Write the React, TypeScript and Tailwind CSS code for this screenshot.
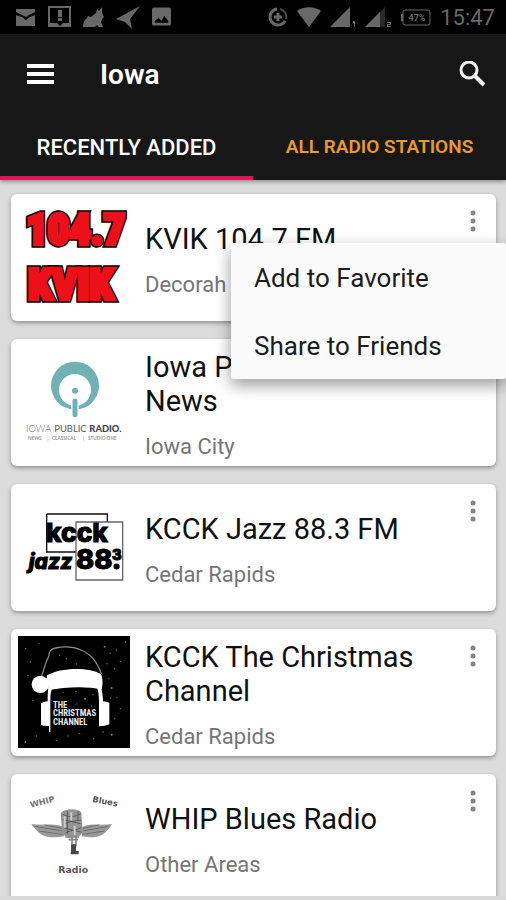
import type { ReactNode } from "react";

function KvikLogo() {
  return (
    <svg viewBox="54 49 336 336" className="size-28" aria-label="104.7 KVIK">
      <g
        fill="#ee1018"
        fontFamily="'Roboto Condensed', 'Liberation Sans Narrow', Roboto, sans-serif"
        fontWeight="800"
      >
        <text x="79" y="179" fontSize="127" stroke="#000" strokeWidth="22">104.7</text>
        <text x="79" y="179" fontSize="127" stroke="#ee1018" strokeWidth="13">104.7</text>
        <text x="84" y="343" fontSize="130" stroke="#000" strokeWidth="22">KVIK</text>
        <text x="84" y="343" fontSize="130" stroke="#ee1018" strokeWidth="13">KVIK</text>
      </g>
    </svg>
  );
}

function IowaPublicLogo() {
  return (
    <svg viewBox="54 49 336 336" className="size-28" aria-label="Iowa Public Radio">
      <circle cx="225" cy="168" r="72" fill="#6fb1b5" />
      <circle cx="225" cy="181" r="48" fill="#fff" />
      <path d="M214 205h22v46h-22z" fill="#fff" />
      <circle cx="225" cy="183" r="9" fill="#6fb1b5" />
      <path d="M225 214v41" stroke="#6fb1b5" strokeWidth="15" strokeLinecap="round" />
      <g fontFamily="Lato, sans-serif" fill="#666">
        <text x="78" y="307" fontSize="28" fontWeight="300">IOWA</text>
        <text x="163" y="307" fontSize="28" fontWeight="500">PUBLIC</text>
        <text x="268" y="307" fontSize="28" fontWeight="900" fill="#444">RADIO.</text>
        <text x="84" y="330" fontSize="14" fontWeight="700" fill="#999">NEWS</text>
        <text x="142" y="330" fontSize="14" fill="#999">|</text>
        <text x="156" y="330" fontSize="14" fontWeight="700" fill="#999">CLASSICAL</text>
        <text x="249" y="330" fontSize="14" fill="#999">|</text>
        <text x="264" y="330" fontSize="14" fontWeight="700" fill="#999">STUDIO ONE</text>
      </g>
    </svg>
  );
}

function KcckLogo() {
  return (
    <svg viewBox="54 49 336 336" className="size-28" aria-label="KCCK Jazz 88.3">
      <path d="M140 118h182v24M140 118v114h88" fill="none" stroke="#111" strokeWidth="4" />
      <path d="M228 142h140v174h-140z" fill="none" stroke="#666" strokeWidth="4" />
      <g fontFamily="Inter, 'Open Sans', sans-serif" fontWeight="800" fill="#000" stroke="#000" strokeWidth="3">
        <text x="138" y="203" fontSize="79">kcck</text>
        <text x="86" y="283" fontSize="63" fontStyle="italic">jazz</text>
        <text x="228" y="283" fontSize="82">88.</text>
        <text x="336" y="256" fontSize="44">3</text>
      </g>
    </svg>
  );
}

const snow = [
  [78, 90, 2], [92, 130, 2], [118, 74, 2], [84, 170, 2], [100, 245, 2], [77, 370, 3], [110, 352, 2],
  [315, 84, 3], [332, 104, 2], [350, 94, 2], [378, 70, 2], [322, 135, 2], [345, 150, 2], [362, 128, 2],
  [328, 180, 2], [336, 208, 3], [352, 236, 2], [333, 238, 2], [362, 270, 2], [345, 300, 2], [336, 348, 3],
  [310, 340, 2], [282, 360, 2], [240, 345, 2], [205, 352, 2], [170, 365, 2], [190, 222, 2], [228, 218, 2],
  [256, 240, 3], [280, 228, 2], [232, 256, 2], [276, 262, 2], [200, 120, 2], [230, 136, 2], [180, 110, 2],
];

function ChristmasLogo() {
  return (
    <svg viewBox="55 52 336 336" className="size-28" aria-label="The Christmas Channel">
      <path d="M55 52h336v336H55z" fill="#000" />
      {snow.map(([x, y, r]) => (
        <circle key={`${x}-${y}`} cx={x} cy={y} r={r} fill="#777" />
      ))}
      <path
        d="M126 172C134 150 138 128 148 112C148 98 152 91 168 88C196 82 222 84 244 94C274 106 294 132 305 166"
        fill="none"
        stroke="#8a8a8a"
        strokeWidth="4"
      />
      <path d="M142 170C180 146 268 144 304 166C310 180 310 196 306 212C262 202 196 204 148 214C142 200 140 184 142 170z" fill="#fff" />
      <circle cx="122" cy="197" r="26" fill="#fff" />
      <path d="M146 208h12c-6 12-6 26-6 40v92h-4v-18c-10 0-18-1-24-4v-64c6-4 12-5 20-6c0-14 0-28 2-40z" fill="#fff" />
      <path d="M292 206h12c4 14 6 28 6 42c8 1 14 2 19 5v64c-8 4-18 6-31 6v-75c0-16-2-30-6-42z" fill="#fff" />
      <g fontFamily="'Roboto Condensed', 'Liberation Sans Narrow', Roboto, sans-serif" fontWeight="700" fontSize="26" fill="#e8e8e8">
        <text x="160" y="267">THE</text>
        <text x="160" y="293">CHRISTMAS</text>
        <text x="160" y="318">CHANNEL</text>
      </g>
    </svg>
  );
}

function WhipLogo() {
  return (
    <svg viewBox="54 52 336 336" className="size-28" aria-label="WHIP Blues Radio">
      <path d="M94 181C125 186 160 178 192 190v28c-24 4-50 4-66-5c-14-8-24-20-32-32z" fill="#9a9a9a" />
      <path d="M336 181C305 186 274 178 246 190v28c24 4 44 4 60-5c14-8 24-20 30-32z" fill="#9a9a9a" />
      <path d="M104 188l84 14M116 202l72 10M134 184l54 10M326 188l-78 14M314 202l-66 10M296 184l-48 10" stroke="#6f6f6f" strokeWidth="3" />
      <path d="M182 150c8-16 54-18 62-2l4 52c0 12-8 18-18 20h-24c-12-2-20-10-20-22z" fill="#959595" />
      <path d="M188 152c16 10 38 8 54-2M188 168l54 12M190 184c16-12 36-12 52-14M190 192l54 14M196 208c16-10 36-8 48-16M202 142v70M234 142v30" stroke="#5c5c5c" strokeWidth="3" fill="none" />
      <path d="M194 158v34M214 146v24M224 186v28" stroke="#ccc" strokeWidth="6" />
      <path d="M196 220h42M206 228h28M216 220v30M228 222v26" stroke="#858585" strokeWidth="5" />
      <path d="M214 242h14v20h8v10h-24z" fill="#444" />
      <g fontFamily="'DejaVu Sans', sans-serif" fontWeight="700" fill="#555">
        <text x="92" y="132" transform="rotate(-14 92 132)" fontSize="25" fill="#777">WHIP</text>
        <text x="276" y="114" transform="rotate(11 276 114)" fontSize="25">Blues</text>
        <text x="175" y="327" fontSize="28">Radio</text>
      </g>
    </svg>
  );
}

function StatusBar() {
  return (
    <div className="flex h-[34px] shrink-0 items-center justify-between bg-black pr-[11px] pl-[15px] text-[#686868]">
      <div className="flex items-center gap-3">
        <svg width="21" height="17" viewBox="0 0 21 17" fill="currentColor">
          <path d="M1 0h19v3l-6 3-3 2-4-2-6-3zM1 6l6 2 4 3 4-3 5-2v11H1z" />
        </svg>
        <svg width="23" height="22" viewBox="0 0 23 22" fill="currentColor">
          <path fillRule="evenodd" d="M0 0h23v21H0zM2 2v15h19V2z" />
          <path d="M10 4h4v7h-4zM10 12h4v3h-4z" />
          <path d="M8 16h8l-4 4z" fill="#000" />
        </svg>
        <svg width="21" height="21" viewBox="0 0 21 21" fill="currentColor">
          <path d="M0 20c0-4 1-7 4-9l1-2 3 1 5-4 1-4 2 2 3-4v6l2 4-2 2-1 3 2 5h-4l-2-2-2 2z" />
        </svg>
        <svg width="24" height="23" viewBox="0 0 24 23" fill="currentColor">
          <path d="M24 0L0 13l9 3 7 7-2-10z" />
        </svg>
        <svg width="19" height="20" viewBox="0 0 20 20" fill="currentColor">
          <path fillRule="evenodd" d="M2 0h16a2 2 0 0 1 2 2v15a2 2 0 0 1-2 2H2a2 2 0 0 1-2-2V2a2 2 0 0 1 2-2zM3 16h14v-2l-4-5-3 5-3-3-4 3z" />
        </svg>
      </div>
      <div className="flex items-center gap-[9px]">
        <svg width="20" height="20" viewBox="0 0 20 20" fill="none" stroke="currentColor">
          <path d="M9 2a8 8 0 1 0 8 12" strokeWidth="3" />
          <path d="M12 2a8 8 0 0 1 6 10" strokeWidth="2" opacity=".7" />
          <path d="M10 6v8M6 10h8" strokeWidth="3" />
        </svg>
        <svg width="24" height="20" viewBox="0 0 24 20" fill="currentColor">
          <path d="M0 4C7-1 17-1 24 4L12 20z" />
        </svg>
        <svg width="26" height="20" viewBox="0 0 26 20" fill="currentColor">
          <path d="M20 0v20H0z" />
          <path d="M23 14h2v6h-1v-4h-1z" />
        </svg>
        <svg width="27" height="20" viewBox="0 0 27 20" fill="currentColor">
          <path d="M20 0v20H0z" opacity=".4" />
          <path d="M15 5v15H0z" />
          <path d="M22 15h4v3h-3v1h3v1h-4v-3h3v-1h-3z" />
        </svg>
        <svg width="30" height="17" viewBox="0 0 30 17">
          <rect x="2" y="1" width="27" height="15" rx="2" fill="none" stroke="currentColor" strokeWidth="1" />
          <path d="M0 5h2v7H0z" fill="currentColor" />
          <text x="16" y="12" textAnchor="middle" fontSize="9" fontWeight="700" fill="currentColor">47%</text>
        </svg>
        <span className="text-[22px]">15:47</span>
      </div>
    </div>
  );
}

type Station = {
  name: string;
  city: string;
  logo: ReactNode;
};

const stations: Station[] = [
  { name: "KVIK 104.7 FM", city: "Decorah", logo: <KvikLogo /> },
  { name: "Iowa Public Radio - News", city: "Iowa City", logo: <IowaPublicLogo /> },
  { name: "KCCK Jazz 88.3 FM", city: "Cedar Rapids", logo: <KcckLogo /> },
  { name: "KCCK The Christmas Channel", city: "Cedar Rapids", logo: <ChristmasLogo /> },
  { name: "WHIP Blues Radio", city: "Other Areas", logo: <WhipLogo /> },
];

function StationMenu() {
  return (
    <div
      role="menu"
      className="absolute top-[49px] -right-[10px] z-10 flex w-[275px] flex-col rounded-xs bg-[#fafafa] text-[26px] text-[#1c1c1c] shadow-[0_6px_16px_rgba(0,0,0,0.4)]"
    >
      <button role="menuitem" className="h-[68px] px-[23px] pt-[3px] text-left">Add to Favorite</button>
      <button role="menuitem" className="h-[68px] px-[23px] pt-[3px] text-left">Share to Friends</button>
    </div>
  );
}

function StationCard({ station, menuOpen }: { station: Station; menuOpen: boolean }) {
  return (
    <li className="relative flex min-h-[127px] shrink-0 rounded-md bg-white p-[7px] shadow-[0_2px_4px_rgba(0,0,0,0.35)]">
      <div className="shrink-0">{station.logo}</div>
      <div className="ml-[15px] flex min-w-0 flex-1 flex-col justify-center gap-[17px] pt-1">
        <h2 className="text-[29px] leading-[34px] text-[#111]">{station.name}</h2>
        <p className="text-[22px] leading-6 text-[#757575]">{station.city}</p>
      </div>
      <button aria-label={`Options for ${station.name}`} className="flex h-10 w-8 shrink-0 items-center justify-center">
        <svg width="6" height="22" viewBox="0 0 6 22" fill="#858585">
          <circle cx="3" cy="3" r="2.500" />
          <circle cx="3" cy="11" r="2.500" />
          <circle cx="3" cy="19" r="2.500" />
        </svg>
      </button>
      {menuOpen && <StationMenu />}
    </li>
  );
}

export default function App() {
  return (
    <div className="flex h-screen flex-col overflow-hidden bg-[#dcdcdc] font-[Roboto,sans-serif]">
      <StatusBar />

      {/* App bar */}
      <header className="z-20 shrink-0 bg-[#171717] text-white shadow-[0_2px_4px_rgba(0,0,0,0.35)]">
        <div className="flex h-20 items-center px-5">
          <button aria-label="Open menu" className="flex w-10 justify-center">
            <svg width="27" height="20" viewBox="0 0 27 20" fill="#fff">
              <path d="M0 0h27v4H0zM0 8h27v4H0zM0 16h27v4H0z" />
            </svg>
          </button>
          <h1 className="ml-10 flex-1 pt-px text-[28px] font-semibold">Iowa</h1>
          <button aria-label="Search">
            <svg width="27" height="27" viewBox="0 0 27 27" fill="none" stroke="#f2f2f2">
              <circle cx="10" cy="9" r="8" strokeWidth="3" />
              <path d="M16 15l9 9" strokeWidth="4" />
            </svg>
          </button>
        </div>
        <nav className="flex h-[66px]" role="tablist">
          <button role="tab" aria-selected="true" className="flex-1 border-b-4 border-[#e4125c] pt-1 text-[22px] font-medium">
            RECENTLY ADDED
          </button>
          <button role="tab" aria-selected="false" className="flex-1 border-b-4 border-transparent pt-1 text-[19px] font-semibold text-[#e69a2e]">
            ALL RADIO STATIONS
          </button>
        </nav>
      </header>

      {/* Station list */}
      <main className="min-h-0 flex-1 overflow-hidden">
        <ul className="flex flex-col gap-[18px] pt-[14px] pr-[10px] pl-[11px]">
          {stations.map((station, i) => (
            <StationCard key={station.name} station={station} menuOpen={i === 0} />
          ))}
        </ul>
      </main>
      <div className="h-1 shrink-0 bg-[#d8d8d8]" />
    </div>
  );
}
